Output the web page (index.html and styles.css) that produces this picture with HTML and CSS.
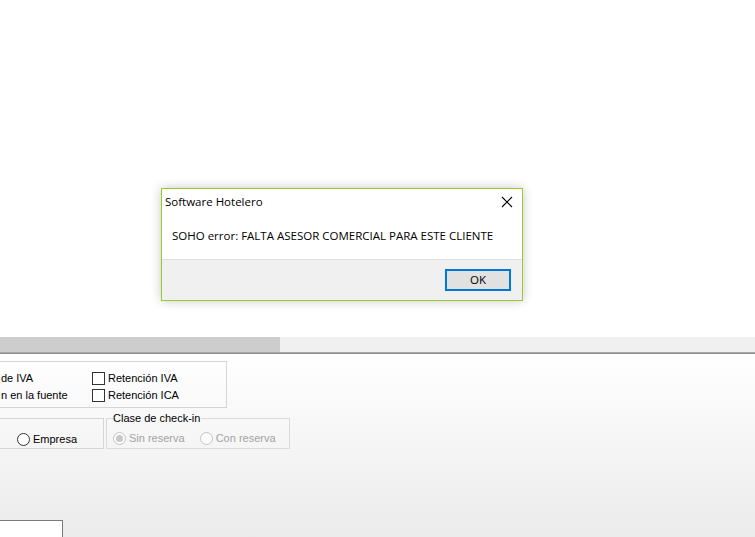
FILE: index.html
```html
<!DOCTYPE html>
<html lang="es">
<head>
<meta charset="utf-8">
<title>Software Hotelero</title>
<link rel="stylesheet" href="styles.css">
</head>
<body>
<div class="screen">
  <div class="top"></div>
  <div class="hscroll"><div class="thumb"></div></div>
  <div class="divider"></div>
  <div class="form">
    <div class="group taxes">
      <div class="col col-left">
        <div class="row">de IVA</div>
        <div class="row">n en la fuente</div>
      </div>
      <div class="col">
        <div class="row"><span class="check"></span><span>Retención IVA</span></div>
        <div class="row"><span class="check"></span><span>Retención ICA</span></div>
      </div>
    </div>
    <div class="row2">
      <div class="group kind">
        <div class="row"><span class="radio"></span><span>Empresa</span></div>
      </div>
      <fieldset class="checkin">
        <legend>Clase de check-in</legend>
        <div class="row disabled">
          <span class="radio on"></span><span class="opt">Sin reserva</span>
          <span class="radio"></span><span>Con reserva</span>
        </div>
      </fieldset>
    </div>
    <div class="textbox"></div>
  </div>

  <div class="dialog">
    <div class="dlg-head">
      <span class="dlg-title">Software Hotelero</span>
      <svg class="dlg-close" width="12" height="12" viewBox="0 0 12 12"><path d="M1 1 L11 11 M11 1 L1 11" stroke="#000" stroke-width="1.1" fill="none"/></svg>
    </div>
    <div class="dlg-body">SOHO error: FALTA ASESOR COMERCIAL PARA ESTE CLIENTE</div>
    <div class="dlg-foot"><button class="ok">OK</button></div>
  </div>
</div>
</body>
</html>
```

FILE: styles.css
```css
* { box-sizing: border-box; }
html, body { margin: 0; padding: 0; }
body { width: 755px; height: 537px; overflow: hidden; background: #fff; }
.screen { position: relative; width: 755px; height: 537px; overflow: hidden; font-family: "Liberation Sans", Arial, sans-serif; font-size: 11px; color: #000; }
.top { height: 337px; background: #fff; }
.hscroll { height: 15px; background: #f0f0f0; }
.thumb { width: 280px; height: 15px; background: #cdcdcd; }
.divider { height: 2px; background: #8d8d8d; border-top: 1px solid #a8a8a8; }
.form { height: 183px; background: linear-gradient(#ffffff, #ebebeb); padding-top: 7px; }

.group { border: 1px solid #d5d5d5; }
.taxes { width: 228px; margin-left: -1px; height: 47px; display: flex; padding: 10px 0 0 1px; }
.col { display: flex; flex-direction: column; gap: 4px; }
.col-left { width: 91px; }
.row { height: 13px; line-height: 13px; display: flex; align-items: center; white-space: nowrap; }
.check { width: 13px; height: 13px; border: 1px solid #333; background: #fff; margin-right: 3px; flex: none; }

.row2 { display: flex; gap: 2px; margin-top: 4px; align-items: flex-start; }
.kind { width: 105px; margin-left: -1px; height: 31px; margin-top: 6px; padding: 14px 0 0 17px; }
.radio { width: 13px; height: 13px; border: 1px solid #333; border-radius: 50%; background: #fff; margin-right: 3px; flex: none; position: relative; }
.checkin { margin: 0; width: 184px; height: 37px; border: 1px solid #dadada; padding: 8px 0 0 6px; min-width: 0; }
.checkin legend { padding: 0 1px 0 0; margin-left: 0; line-height: 12px; color: #000; font-size: 11px; }
.disabled { color: #a3a3a3; }
.disabled .radio { border-color: #c4c4c4; background: #fbfbfb; }
.disabled .radio.on::after { content: ""; position: absolute; left: 2px; top: 2px; width: 7px; height: 7px; border-radius: 50%; background: #c8c8c8; }
.opt { margin-right: 15px; }

.textbox { width: 64px; height: 30px; margin-left: -1px; margin-top: 71px; border: 1px solid #7a7a7a; background: #fff; }

/* dialog */
.dialog { position: absolute; left: 161px; top: 188px; width: 362px; height: 113px; border: 1px solid #98cb2a; background: #fff; box-shadow: 0 0 10px rgba(0,0,0,0.22); font-family: "Open Sans", "Noto Sans", sans-serif; font-size: 11.5px; color: #000; display: flex; flex-direction: column; }
.dlg-head { height: 25px; display: flex; align-items: center; justify-content: space-between; padding: 0 9px 0 3px; }
.dlg-title { line-height: 25px; }
.dlg-close { display: block; margin-top: 0; }
.dlg-body { height: 45px; padding: 14px 0 0 10px; line-height: 16px; white-space: nowrap; }
.dlg-foot { flex: 1; background: #f0f0f0; border-top: 1px solid #dfdfdf; display: flex; justify-content: flex-end; align-items: flex-start; padding: 9px 11px 0 0; }
.ok { width: 66px; height: 22px; border: 2px solid #0078d7; background: #e1e1e1; font-family: inherit; font-size: 11.5px; color: #000; padding: 0; line-height: 18px; }
```
